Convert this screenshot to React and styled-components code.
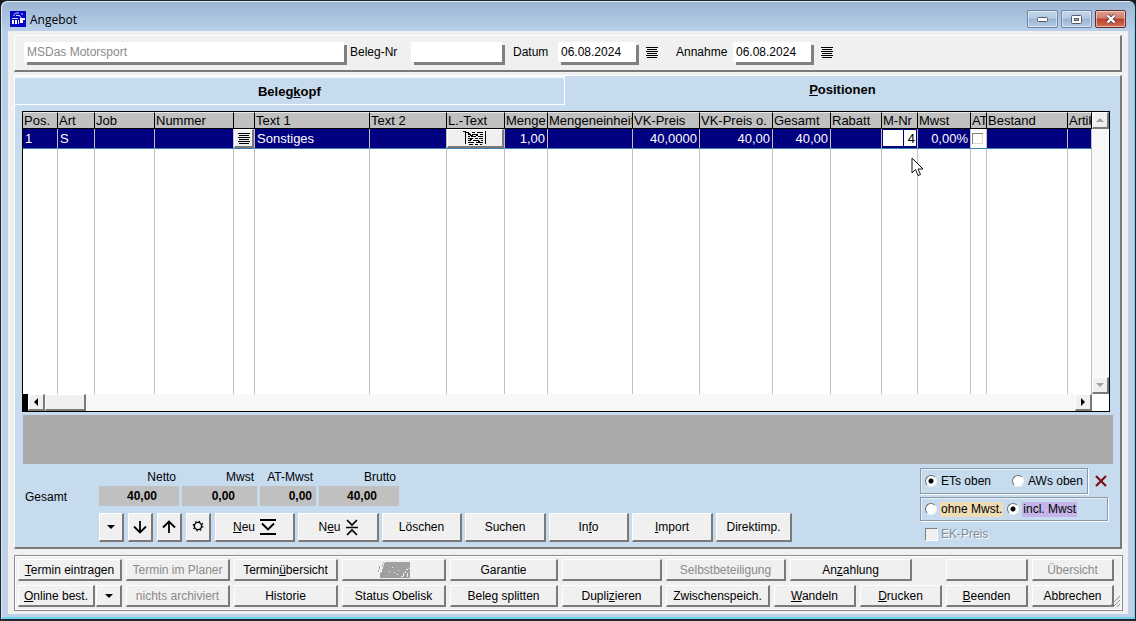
import React, { useState } from "react";
import styled, { createGlobalStyle, css } from "styled-components";

const columns = [
  { title: "Pos.", width: 35, value: "1" },
  { title: "Art", width: 37, value: "S" },
  { title: "Job", width: 60 },
  { title: "Nummer", width: 79 },
  { title: "", width: 21, kind: "list" },
  { title: "Text 1", width: 115, value: "Sonstiges" },
  { title: "Text 2", width: 77 },
  { title: "L.-Text", width: 58, kind: "memo" },
  { title: "Menge", width: 43, value: "1,00", right: true },
  { title: "Mengeneinheit", width: 85 },
  { title: "VK-Preis", width: 67, value: "40,0000", right: true },
  { title: "VK-Preis o.", width: 73, value: "40,00", right: true },
  { title: "Gesamt", width: 58, value: "40,00", right: true },
  { title: "Rabatt", width: 51 },
  { title: "M-Nr", width: 36, kind: "edit" },
  { title: "Mwst", width: 53, value: "0,00%", right: true },
  { title: "AT", width: 16, kind: "check" },
  { title: "Bestand", width: 81 },
  { title: "Artikel" },
];

const totals = [
  { label: "Netto", value: "40,00", inset: 22 },
  { label: "Mwst", value: "0,00", inset: 22 },
  { label: "AT-Mwst", value: "0,00", inset: 4 },
  { label: "Brutto", value: "40,00", inset: 22 },
];

const ListIcon = () => (
  <svg width="12" height="11" viewBox="0 0 12 11" shapeRendering="crispEdges">
    <path d="M0 .5h12M1 2.5h10M0 4.5h12M1 6.5h10M0 8.5h12M1 10.5h10" stroke="#000" />
  </svg>
);

const MemoIcon = () => (
  <svg width="24" height="14" viewBox="0 0 24 14" shapeRendering="crispEdges" fill="none" stroke="#000">
    <path d="M0 .5h3M2 1.5h4M2.5 1v12M22.5 0v13" />
    <path d="M9 1.5h3M14 1.5h6M5 3.5h3M9 3.5h6M17 3.5h3M5 5.5h2M8 5.5h5M15 5.5h5M5 7.5h5M12 7.5h3M16 7.5h4M5 9.5h3M10 9.5h6M18 9.5h2M5 11.5h6M13 11.5h7M6 13h4M12 13h3M17 13h2" />
    <path d="M5 2.5h2M7 4.5h3M13 4.5h2M7 8.5h2M15 10.5h2" />
  </svg>
);

const Caret = ({ dir = "down", color = "#000" }) => {
  const shapes = {
    down: "M0 2h8L4 6z",
    up: "M0 6h8L4 2z",
    left: "M6 0v8L2 4z",
    right: "M2 0v8l4-4z",
  };
  return (
    <svg width="8" height="8" viewBox="0 0 8 8">
      <path d={shapes[dir]} fill={color} />
    </svg>
  );
};

const ArrowIcon = ({ up }) => (
  <svg width="14" height="14" viewBox="0 0 14 14" fill="none" stroke="#000" strokeWidth="1.8">
    <path d={up ? "M7 13V2M1 7.5l6-6 6 6" : "M7 1v11M1 6.5l6 6 6-6"} />
  </svg>
);

const GearIcon = () => (
  <svg width="12" height="15" viewBox="0 0 12 15" fill="none" stroke="#000">
    <circle cx="6" cy="6" r="3.6" strokeWidth="1.4" />
    <circle cx="6" cy="6" r="4.8" strokeWidth="1.2" strokeDasharray="1.6 2.17" />
  </svg>
);

const AppendIcon = () => (
  <svg width="16" height="16" viewBox="0 0 16 16" fill="none" stroke="#000" strokeWidth="1.9">
    <path d="M0 1h16M0 15h16M2 4.5l6 6 6-6" />
  </svg>
);

const InsertIcon = () => (
  <svg width="12" height="17" viewBox="0 0 12 17" fill="none" stroke="#000" strokeWidth="1.7">
    <path d="M0 8.5h12M1 1l5 5 5-5M1 16l5-5 5 5" />
  </svg>
);

const HatchIcon = () => (
  <svg width="32" height="16" viewBox="0 0 32 16" shapeRendering="crispEdges">
    <path d="M7 0h25v16H2l2-8z" fill="#a0a0a0" />
    <path d="M1 4v3M0 8v2M2 11v4M4 2v2M5 0v1" stroke="#a0a0a0" />
    <path d="M11 9h1M14 5h1M16 10h1M20 8h1M19 12h1M25 11v3M28 7h2M27 9v2M29 11v4M31 6v1M23 14h2" stroke="#f0f0f0" />
  </svg>
);

const AppIcon = () => (
  <svg width="16" height="16" viewBox="0 0 16 16">
    <path d="M0 0h16v16H0z" fill="#0505c8" />
    <path d="M2 9h2v4H2zM5 9h2v4H5zM8 9h1v4H8zM10 7h5v2h-2v3h-3z" fill="#fff" />
    <path d="M4 5c0-3 2-3 5-3M6 4.500h3M2 7.500h6M9 4l3 4M11 3h2" stroke="#cfd6ff" fill="none" />
  </svg>
);

const Cursor = () => (
  <svg width="13" height="21" viewBox="0 0 13 21">
    <path d="M1 1v15l3.5-3.5L7 18.5l2.5-1L7 12h5z" fill="#fff" stroke="#111" />
  </svg>
);

// underlines the access key, marked with & in the text
const Caption = ({ text }) => {
  const pos = text.indexOf("&");
  if (pos < 0) return <span>{text}</span>;
  return (
    <span>
      {text.slice(0, pos)}
      <u>{text[pos + 1]}</u>
      {text.slice(pos + 2)}
    </span>
  );
};

function App() {
  const [oben, setOben] = useState("ets");
  const [mwst, setMwst] = useState("incl");
  const [mnr, setMnr] = useState("4");

  const renderCell = (col) => {
    if (col.kind === "list") return <CellButton aria-label="Liste"><ListIcon /></CellButton>;
    if (col.kind === "memo") return <CellButton aria-label="Langtext"><MemoIcon /></CellButton>;
    if (col.kind === "edit")
      return (
        <EditBox>
          <input aria-label="M-Nr" value={mnr} onChange={(e) => setMnr(e.target.value)} />
        </EditBox>
      );
    if (col.kind === "check") return <CellCheck type="checkbox" aria-label="AT" />;
    return col.value;
  };

  return (
    <>
      <GlobalStyle />
      <Window>
        <TitleBar>
          <AppIcon />
          <Title>Angebot</Title>
          <WindowButton aria-label="Minimieren">
            <svg width="11" height="5" viewBox="0 0 11 5">
              <rect x=".5" y=".5" width="10" height="4" rx="1" fill="#fff" stroke="#555d6b" />
            </svg>
          </WindowButton>
          <WindowButton aria-label="Maximieren">
            <svg width="11" height="9" viewBox="0 0 11 9">
              <rect x=".5" y=".5" width="10" height="8" rx="1" fill="#fff" stroke="#555d6b" />
              <rect x="3.5" y="3.5" width="4" height="2" fill="#9fb6d0" stroke="#555d6b" />
            </svg>
          </WindowButton>
          <WindowButton $close aria-label="Schließen">
            <svg width="12" height="10" viewBox="0 0 12 10">
              <path d="M2.5 1.5l7 7M9.5 1.5l-7 7" stroke="#5b4348" strokeWidth="4" />
              <path d="M2.5 1.5l7 7M9.5 1.5l-7 7" stroke="#fff" strokeWidth="2.4" />
            </svg>
          </WindowButton>
        </TitleBar>

        <Client>
          <HeaderPanel>
            <Field $width={320} $muted aria-label="Kunde" defaultValue="MSDas Motorsport" />
            <FieldLabel htmlFor="belegnr" $width={55} $tight>Beleg-Nr</FieldLabel>
            <Field $width={91} id="belegnr" />
            <FieldLabel htmlFor="datum" $width={39}>Datum</FieldLabel>
            <Field $width={78} id="datum" defaultValue="06.08.2024" />
            <PlainButton aria-label="Datum wählen"><ListIcon /></PlainButton>
            <FieldLabel htmlFor="annahme" $width={51}>Annahme</FieldLabel>
            <Field $width={78} id="annahme" defaultValue="06.08.2024" />
            <PlainButton aria-label="Annahme wählen"><ListIcon /></PlainButton>
          </HeaderPanel>

          <MainPanel>
            <Tabs>
              <Tab><Caption text="Beleg&kopf" /></Tab>
              <Tab $active><Caption text="&Positionen" /></Tab>
            </Tabs>

            <GridFrame>
              <Positions>
                <colgroup>
                  {columns.map((col) => (
                    <Col key={col.title} $width={col.width} />
                  ))}
                </colgroup>
                <thead>
                  <tr>
                    {columns.map((col) => (
                      <th key={col.title}>{col.title}</th>
                    ))}
                  </tr>
                </thead>
                <tbody>
                  <SelectedRow>
                    {columns.map((col) => (
                      <Cell key={col.title} $right={col.right} $flush={!!col.kind}>
                        {renderCell(col)}
                      </Cell>
                    ))}
                  </SelectedRow>
                  <EmptyRow>
                    {columns.map((col) => (
                      <td key={col.title} />
                    ))}
                  </EmptyRow>
                </tbody>
              </Positions>
              <VerticalBar>
                <ScrollButton aria-label="Nach oben"><Caret dir="up" color="#a0a0a0" /></ScrollButton>
                <ScrollButton aria-label="Nach unten"><Caret color="#a0a0a0" /></ScrollButton>
              </VerticalBar>
              <HorizontalBar>
                <ScrollButton aria-label="Nach links"><Caret dir="left" /></ScrollButton>
                <Thumb />
                <ScrollButton aria-label="Nach rechts"><Caret dir="right" /></ScrollButton>
              </HorizontalBar>
            </GridFrame>

            <InfoStrip />

            <Footer>
              <div>
                <Totals>
                  <TotalsLabel>Gesamt</TotalsLabel>
                  {totals.map((t) => (
                    <Total key={t.label}>
                      <span>{t.label}</span>
                      <TotalValue $inset={t.inset}>{t.value}</TotalValue>
                    </Total>
                  ))}
                </Totals>
                <Actions>
                  <IconRow>
                    <Button $width={25} aria-label="Menü"><Caret /></Button>
                    <Button $width={25} aria-label="Abwärts"><ArrowIcon /></Button>
                    <Button $width={25} aria-label="Aufwärts"><ArrowIcon up /></Button>
                    <Button $width={25} aria-label="Einstellungen"><GearIcon /></Button>
                  </IconRow>
                  <Button $width={80}><Caption text="&Neu" /><AppendIcon /></Button>
                  <Button $width={81}><Caption text="N&eu" /><InsertIcon /></Button>
                  <Button $width={80}>Löschen</Button>
                  <Button $width={81}>Suchen</Button>
                  <Button $width={80}><Caption text="In&fo" /></Button>
                  <Button $width={81}><Caption text="&Import" /></Button>
                  <Button $width={76}>Direktimp.</Button>
                </Actions>
              </div>

              <Options>
                <OptionLine>
                  <OptionBox $gap={20}>
                    <Option>
                      <Radio name="oben" checked={oben === "ets"} onChange={() => setOben("ets")} />
                      <OptionText>ETs oben</OptionText>
                    </Option>
                    <Option>
                      <Radio name="oben" checked={oben === "aws"} onChange={() => setOben("aws")} />
                      <OptionText>AWs oben</OptionText>
                    </Option>
                  </OptionBox>
                  <PlainButton aria-label="Entfernen">
                    <svg width="12" height="12" viewBox="0 0 12 12">
                      <path d="M1 1l10 10M11 1L1 11" stroke="#7d0f14" strokeWidth="2.2" />
                    </svg>
                  </PlainButton>
                </OptionLine>
                <OptionBox $gap={4} $wide>
                  <Option>
                    <Radio name="mwst" checked={mwst === "ohne"} onChange={() => setMwst("ohne")} />
                    <OptionText $color="#efdcb4">ohne Mwst.</OptionText>
                  </Option>
                  <Option>
                    <Radio name="mwst" checked={mwst === "incl"} onChange={() => setMwst("incl")} />
                    <OptionText $color="#c3b5ea">incl. Mwst</OptionText>
                  </Option>
                </OptionBox>
                <DisabledOption>
                  <CheckBox type="checkbox" disabled />
                  <span>EK-Preis</span>
                </DisabledOption>
              </Options>
            </Footer>
          </MainPanel>

          <BottomPanel>
            <BottomRow>
              <ButtonGroup>
                <Button $small $width={104}><Caption text="&Termin eintragen" /></Button>
                <Button $small $width={104} disabled>Termin im Planer</Button>
                <Button $small $width={104}><Caption text="Termin&übersicht" /></Button>
                <Button $small $width={104} aria-label="Bild"><HatchIcon /></Button>
                <Button $small $width={108}>Garantie</Button>
                <Button $small $width={100} aria-label="Frei" />
                <Button $small $width={120} disabled>Selbstbeteiligung</Button>
                <Button $small $width={122}><Caption text="An&zahlung" /></Button>
              </ButtonGroup>
              <ButtonGroup>
                <Button $small $width={82} aria-label="Frei" />
                <Button $small $width={82} disabled>Übersicht</Button>
              </ButtonGroup>
            </BottomRow>
            <BottomRow>
              <ButtonGroup>
                <SplitButton>
                  <Button $small $width={77}><Caption text="&Online best." /></Button>
                  <Button $small $width={26} aria-label="Online Auswahl"><Caret /></Button>
                </SplitButton>
                <Button $small $width={104} disabled>nichts archiviert</Button>
                <Button $small $width={104}>Historie</Button>
                <Button $small $width={104}>Status Obelisk</Button>
                <Button $small $width={108}>Beleg splitten</Button>
                <Button $small $width={100}><Caption text="Dupli&zieren" /></Button>
                <Button $small $width={104}>Zwischenspeich.</Button>
              </ButtonGroup>
              <ButtonGroup>
                <Button $small $width={82}><Caption text="&Wandeln" /></Button>
                <Button $small $width={82}><Caption text="&Drucken" /></Button>
                <Button $small $width={82}><Caption text="&Beenden" /></Button>
                <Button $small $width={82}>Abbrechen</Button>
              </ButtonGroup>
            </BottomRow>
            <Grip>
              <svg width="11" height="11" viewBox="0 0 11 11" stroke="#909090">
                <path d="M0 11L11 0M4 11l7-7M8 11l3-3" />
              </svg>
            </Grip>
          </BottomPanel>
        </Client>
        <Pointer><Cursor /></Pointer>
      </Window>
    </>
  );
}

export default App;

const GlobalStyle = createGlobalStyle`
  * {
    box-sizing: border-box;
  }
  body {
    margin: 0;
    background: #14181c;
    font-family: "Liberation Sans", Arial, sans-serif;
    font-size: 12px;
    color: #000;
  }
  button, input {
    font: inherit;
    color: inherit;
    margin: 0;
  }
  svg {
    display: block;
    flex: none;
  }
`;

const bevel = css`
  border-style: solid;
  border-width: 1px 2px 2px 1px;
  border-color: #fff #7a7a7a #7a7a7a #fff;
  background: #f0f0f0;
`;

const Window = styled.div`
  position: relative;
  display: flex;
  flex-direction: column;
  min-height: 100vh;
  padding: 0 6px 5px;
  border: 1px solid #20262c;
  border-bottom-width: 2px;
  border-radius: 7px 7px 0 0;
  background: linear-gradient(#9ab5d3 0, #b9d0ea 31px, #b9d0ea 120px, #bfd0e9 122px);
  box-shadow: inset 1px 1px 0 #dce9f5, inset -1px -2px 0 #6fd3ee;
`;

const TitleBar = styled.div`
  display: flex;
  align-items: center;
  gap: 3px;
  height: 30px;
  padding: 6px 3px 0;
`;

const Title = styled.div`
  flex: 1;
  padding-left: 1px;
  font-family: "Open Sans", "Noto Sans", sans-serif;
  font-size: 12px;
`;

const WindowButton = styled.button`
  display: flex;
  align-items: center;
  justify-content: center;
  width: 31px;
  height: 18px;
  padding: 0;
  border: 1px solid ${(p) => (p.$close ? "#6b2a2a" : "#6d84a3")};
  border-radius: 2px;
  background: ${(p) =>
    p.$close
      ? "linear-gradient(#dd9c8f 0, #d0806f 45%, #b8402b 50%, #cf7054 100%)"
      : "linear-gradient(#c3d5ea 0, #b4c9e2 45%, #98b3d2 50%, #b4cce6 100%)"};
  box-shadow: inset 0 0 0 1px rgba(255, 255, 255, 0.5);
`;

const Client = styled.div`
  flex: 1;
  display: flex;
  flex-direction: column;
  margin: 0 1px;
  padding: 4px 6px 2px;
  background: #f0f0f0;
`;

const HeaderPanel = styled.div`
  display: flex;
  align-items: flex-start;
  height: 37px;
  padding: 6px 9px 0;
  border-style: solid;
  border-width: 1px 2px 2px 1px;
  border-color: #fff #7a7a7a #7a7a7a #fff;
`;

const Field = styled.input`
  width: ${(p) => p.$width}px;
  height: 20px;
  padding: 0 3px;
  border: 0;
  outline: 0;
  background: #fff;
  color: ${(p) => (p.$muted ? "#8a8a8a" : "#000")};
  box-shadow: 3px 3px 0 #808080;
`;

const FieldLabel = styled.label`
  width: ${(p) => p.$width}px;
  margin: 0 6px 0 ${(p) => (p.$tight ? 6 : 11)}px;
  line-height: 20px;
  white-space: nowrap;
`;

const PlainButton = styled.button`
  display: flex;
  align-items: center;
  height: 20px;
  margin: 0 7px 0 10px;
  padding: 0;
  border: 0;
  background: none;
`;

const MainPanel = styled.div`
  margin-top: 3px;
  border-style: solid;
  border-width: 1px 2px 2px 1px;
  border-color: #fff #7a7a7a #7a7a7a #fff;
  background: #c6dbee;
`;

const Tabs = styled.div`
  display: grid;
  grid-template-columns: 99fr 100fr;
  align-items: start;
  height: 29px;
`;

const Tab = styled.button`
  height: ${(p) => (p.$active ? 26 : 29)}px;
  padding: 0;
  border: 0;
  border-right: ${(p) => (p.$active ? "0" : "1px solid #fff")};
  border-bottom: ${(p) => (p.$active ? "0" : "1px solid #fff")};
  border-top: ${(p) => (p.$active ? "0" : "2px solid #f4f7fa")};
  background: transparent;
  font-size: 13px;
  font-weight: bold;
`;

const GridFrame = styled.div`
  display: grid;
  grid-template-columns: minmax(0, 1fr) 17px;
  margin: 6px 10px 0 7px;
  border: 1px solid #000;
  background: #fff;
`;

const Positions = styled.table`
  width: 100%;
  table-layout: fixed;
  border-collapse: separate;
  border-spacing: 0;
  font-size: 13px;

  th {
    height: 17px;
    padding: 0 0 0 1px;
    overflow: hidden;
    border-right: 1px solid #000;
    border-bottom: 1px solid #000;
    border-top: 1px solid #e8e8e8;
    background: #c0c0c0;
    font-weight: normal;
    line-height: 15px;
    text-align: left;
    white-space: nowrap;
  }
  td {
    border-right: 1px solid #c0c0c0;
  }
`;

const Col = styled.col`
  width: ${(p) => (p.$width ? p.$width + "px" : "auto")};
`;

const SelectedRow = styled.tr`
  height: 20px;
  background: #000080;
  color: #fff;
`;

const Cell = styled.td`
  height: 20px;
  padding: ${(p) => (p.$flush ? "0" : "0 2px")};
  overflow: hidden;
  border-bottom: 1px solid #3a7fb5;
  text-align: ${(p) => (p.$right ? "right" : "left")};
  line-height: 19px;
`;

const CellButton = styled.button`
  ${bevel}
  display: flex;
  align-items: center;
  justify-content: center;
  width: 100%;
  height: 19px;
  padding: 0;
`;

const EditBox = styled.div`
  height: 19px;
  padding: 1px 1px 2px 22px;
  background: linear-gradient(#fff, #fff) 1px 1px / 20px 16px no-repeat #000080;

  input {
    display: block;
    width: 100%;
    height: 16px;
    padding: 0 1px;
    border: 0;
    outline: 0;
    background: #fff;
    color: #000;
    text-align: right;
  }
`;

const CellCheck = styled.input`
  appearance: none;
  display: block;
  width: 100%;
  height: 19px;
  border: 3px solid #fff;
  border-width: 4px 3px 4px 1px;
  background: #fff;
  box-shadow: inset 1px 1px 0 #808080, inset -1px -1px 0 #d8d8d8;
`;

const EmptyRow = styled.tr`
  height: 245px;
`;

const VerticalBar = styled.div`
  display: flex;
  flex-direction: column;
  justify-content: space-between;
  background: #f7f7f7;
`;

const HorizontalBar = styled.div`
  display: flex;
  padding-left: 5px;
  background: linear-gradient(#000, #000) 0 0 / 5px 100% no-repeat #f7f7f7;
`;

const ScrollButton = styled.button`
  ${bevel}
  display: flex;
  align-items: center;
  justify-content: center;
  width: 17px;
  height: 17px;
  padding: 0;
`;

const Thumb = styled.div`
  ${bevel}
  width: 41px;
  height: 17px;
  margin-right: auto;
`;

const InfoStrip = styled.div`
  height: 49px;
  margin: 3px 7px 0 8px;
  background: #aaa;
`;

const Footer = styled.div`
  display: flex;
  justify-content: space-between;
  padding: 4px 10px 5px 10px;
`;

const Totals = styled.div`
  display: grid;
  grid-template-columns: 71px 80px 75px 56px 80px;
  column-gap: 3px;
  align-items: end;
`;

const TotalsLabel = styled.div`
  line-height: 18px;
`;

const Total = styled.div`
  text-align: right;

  > span {
    display: block;
    padding-right: 3px;
    line-height: 18px;
  }
`;

const TotalValue = styled.div`
  height: 20px;
  padding-right: ${(p) => p.$inset}px;
  background: #c0c0c0;
  font-weight: bold;
  line-height: 20px;
`;

const Actions = styled.div`
  display: flex;
  gap: 3px;
  margin: 7px 0 0 74px;
`;

const IconRow = styled.div`
  display: flex;
  gap: 4px;
  margin-right: 1px;
`;

const Button = styled.button`
  ${bevel}
  display: flex;
  align-items: center;
  justify-content: center;
  gap: 5px;
  width: ${(p) => p.$width}px;
  height: ${(p) => (p.$small ? 22 : 29)}px;
  padding: 0;
  white-space: nowrap;

  &:disabled {
    color: #8a8a8a;
  }
`;

const Options = styled.div`
  display: flex;
  flex-direction: column;
  gap: 3px;
  width: 190px;
`;

const OptionLine = styled.div`
  display: flex;
  align-items: center;

  > button {
    margin: 0 0 0 7px;
  }
`;

const OptionBox = styled.div`
  display: flex;
  align-items: center;
  gap: ${(p) => p.$gap}px;
  width: ${(p) => (p.$wide ? 188 : 168)}px;
  height: ${(p) => (p.$wide ? 24 : 26)}px;
  padding: 0 4px;
  border: 1px solid #8c98a4;
  box-shadow: 1px 1px 0 #fff, inset 1px 1px 0 #e6eff7;
`;

const Option = styled.label`
  display: flex;
  align-items: center;
  gap: 3px;
  white-space: nowrap;
`;

const OptionText = styled.span`
  padding: 0 1px;
  background: ${(p) => p.$color || "transparent"};
  line-height: 15px;
`;

const Radio = styled.input.attrs({ type: "radio" })`
  appearance: none;
  width: 12px;
  height: 12px;
  border: 1px solid;
  border-color: #707070 #f4f4f4 #f4f4f4 #707070;
  border-radius: 50%;
  background: ${(p) => (p.checked ? "radial-gradient(circle, #000 0 2px, #fff 3px)" : "#fff")};
`;

const DisabledOption = styled(Option)`
  padding: 3px 0 0 5px;
  color: #848c94;
  text-shadow: 1px 1px 0 #fff;
`;

const CheckBox = styled.input`
  appearance: none;
  width: 13px;
  height: 13px;
  border: 1px solid;
  border-color: #808080 #fff #fff #808080;
  background: #f0f0f0;
`;

const BottomPanel = styled.div`
  position: relative;
  display: flex;
  flex-direction: column;
  gap: 4px;
  margin: 6px -1px 0 0;
  padding: 3px 8px 3px 3px;
  border: 1px solid #8a8a8a;
  box-shadow: inset 1px 1px 0 #fff, inset -1px -1px 0 #fff;
`;

const BottomRow = styled.div`
  display: flex;
  justify-content: space-between;
`;

const ButtonGroup = styled.div`
  display: flex;
  gap: 4px;
`;

const SplitButton = styled.div`
  display: flex;
  gap: 1px;
`;

const Grip = styled.div`
  position: absolute;
  right: 2px;
  bottom: 3px;
`;

// mouse pointer lies over the grid
const Pointer = styled.div`
  position: absolute;
  left: 910px;
  top: 156px;
  pointer-events: none;
`;
